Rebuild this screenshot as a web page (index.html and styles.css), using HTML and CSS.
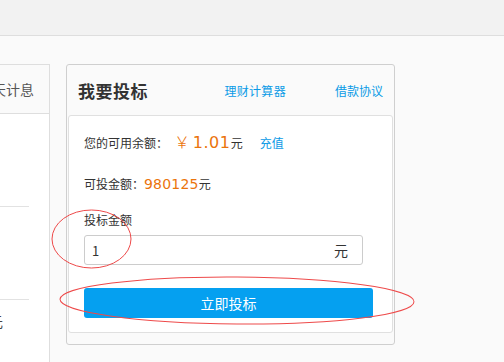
FILE: index.html
```html
<!DOCTYPE html>
<html lang="zh">
<head>
<meta charset="utf-8">
<link rel="stylesheet" href="styles.css">
</head>
<body>
<div class="topbar"></div>
<div class="content">
  <div class="side-card">
    <div class="side-head">天计息</div>
    <div class="side-body">
      <div class="side-row"></div>
      <div class="side-row"></div>
      <div class="side-row last"><span class="side-cut">元</span></div>
    </div>
  </div>
  <div class="bid-card">
    <div class="bid-head">
      <h2 class="bid-title">我要投标</h2>
      <a class="link calc">理财计算器</a>
      <a class="link">借款协议</a>
    </div>
    <div class="bid-body">
      <div class="line balance">您的可用余额：<span class="money big"><span class="yen">￥</span>1.01</span>元<a class="link recharge">充值</a></div>
      <div class="line avail">可投金额：<span class="money mid">980125</span>元</div>
      <div class="label">投标金额</div>
      <div class="input"><span class="val">1</span><span class="unit">元</span></div>
      <button class="btn">立即投标</button>
    </div>
  </div>
</div>
<svg class="marks" width="504" height="362" viewBox="0 0 504 362">
  <ellipse cx="91.5" cy="239" rx="39.5" ry="29" fill="none" stroke="#ee4a4a" stroke-width="1"/>
  <ellipse cx="237" cy="300.5" rx="177" ry="23.5" fill="none" stroke="#ee4a4a" stroke-width="1" transform="rotate(0.4 237 300.5)"/>
</svg>
</body>
</html>
```
FILE: styles.css
```css
html, body {
  margin: 0;
  padding: 0;
}
body {
  width: 504px;
  height: 362px;
  overflow: hidden;
  background: #fafafa;
  font-family: "Noto Sans CJK SC", "Liberation Sans", sans-serif;
  font-size: 12px;
  color: #333;
  position: relative;
}
.topbar {
  height: 35px;
  background: #f2f2f2;
  border-bottom: 1px solid #dedede;
}
.content {
  display: flex;
  align-items: flex-start;
  gap: 16px;
  padding-top: 28px;
}
.side-card {
  margin-left: -151px;
  width: 199px;
  height: 297px;
  border: 1px solid #dedede;
  border-bottom: none;
  background: #fff;
  flex: none;
}
.side-head {
  height: 48px;
  background: #fafafa;
  border-bottom: 1px solid #dedede;
  display: flex;
  align-items: center;
  justify-content: flex-end;
  padding-right: 15px;
  font-size: 14px;
  color: #555;
}
.side-row {
  height: 92px;
  margin-right: 20px;
  border-bottom: 1px solid #e2e2e2;
}
.side-row.last {
  border-bottom: none;
  height: 60px;
  position: relative;
}
.side-cut {
  position: absolute;
  right: 26px;
  top: 11px;
  font-size: 14px;
  color: #444;
}
.bid-card {
  width: 327px;
  height: 279px;
  border: 1px solid #cfcfcf;
  border-radius: 3px;
  background: #fafafa;
  flex: none;
}
.bid-head {
  height: 50px;
  display: flex;
  align-items: center;
  padding: 0 11px;
}
.bid-title {
  margin: 0;
  font-size: 17px;
  font-weight: bold;
  color: #333;
  flex: 1;
  line-height: 1;
  letter-spacing: 0.5px;
}
.link {
  color: #0a9ae6;
  font-size: 12px;
  cursor: pointer;
}
.calc {
  margin-right: 49px;
  letter-spacing: 0.3px;
}
.bid-body {
  margin: 0 1px;
  height: 216px;
  background: #fff;
  border: 1px solid #e0e0e0;
  border-radius: 3px;
  padding: 0 0 0 15px;
}
.line {
  display: flex;
  align-items: baseline;
}
.balance {
  margin-top: 13px;
  height: 20px;
}
.money {
  color: #eb740c;
  font-family: "DejaVu Sans", "Liberation Sans", sans-serif;
}
.big {
  font-size: 16px;
  margin-left: 6px;
  letter-spacing: 0.6px;
}
.yen {
  font-family: "Noto Sans CJK SC", sans-serif;
  font-weight: 300;
  margin-right: 2px;
}
.mid {
  font-size: 14px;
  letter-spacing: 0.2px;
}
.recharge {
  margin-left: 17px;
}
.avail {
  margin-top: 26px;
  height: 20px;
}
.label {
  margin-top: 16px;
  height: 18px;
}
.input {
  margin-top: 6px;
  width: 256px;
  height: 28px;
  border: 1px solid #cccccc;
  border-radius: 3px;
  display: flex;
  align-items: center;
  justify-content: space-between;
  padding: 0 14px 0 7px;
  font-size: 13px;
  color: #333;
}
.unit {
  font-size: 14px;
}
.btn {
  display: block;
  margin-top: 23px;
  width: 289px;
  height: 30px;
  border: none;
  border-radius: 3px;
  background: #05a0f0;
  color: #fff;
  font-family: "Noto Sans CJK SC", sans-serif;
  font-size: 14px;
  padding: 0;
}
.marks {
  position: absolute;
  left: 0;
  top: 0;
  pointer-events: none;
}
```
